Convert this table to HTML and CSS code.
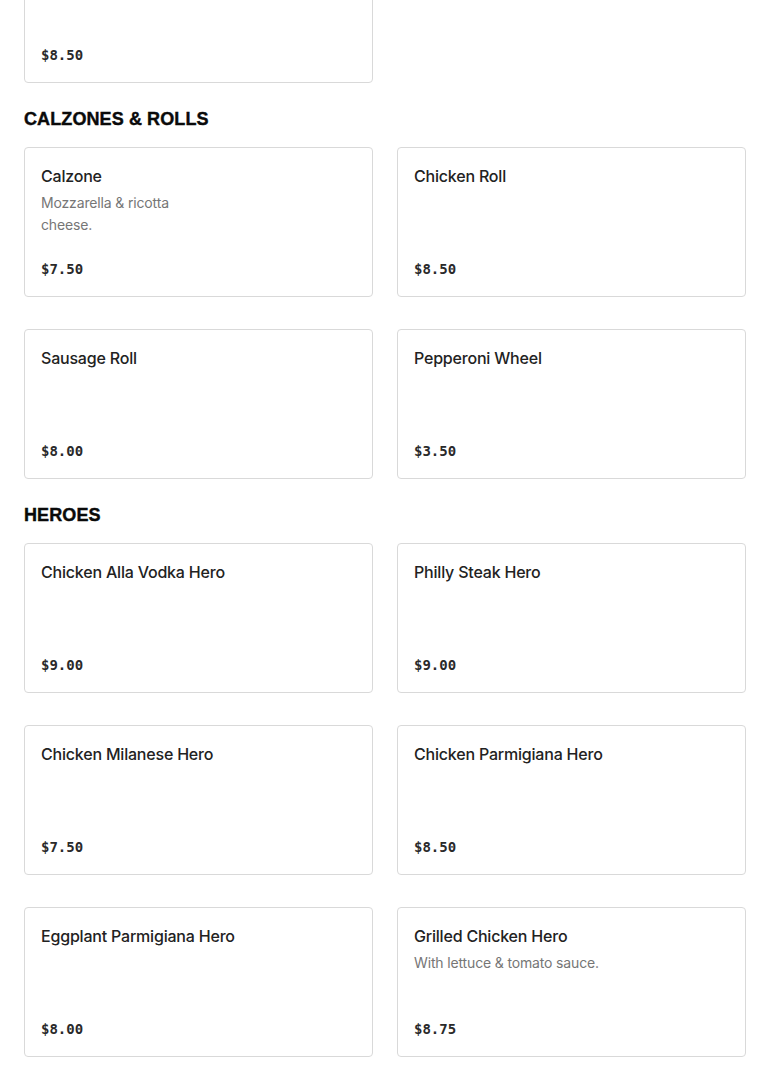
FILE: index.html
```html
<!DOCTYPE html>
<html lang="en">
<head>
<meta charset="utf-8">
<title>Menu</title>
<link rel="stylesheet" href="styles.css">
</head>
<body>
<main class="menu">
  <section class="section section-first">
    <div class="grid">
      <div class="card">
        <div class="title">&nbsp;</div>
        <div class="price">$8.50</div>
      </div>
    </div>
  </section>

  <section class="section">
    <h2 class="heading">CALZONES &amp; ROLLS</h2>
    <div class="grid">
      <div class="card">
        <div class="title">Calzone</div>
        <div class="desc">Mozzarella &amp; ricotta<br>cheese.</div>
        <div class="price">$7.50</div>
      </div>
      <div class="card">
        <div class="title">Chicken Roll</div>
        <div class="price">$8.50</div>
      </div>
      <div class="card">
        <div class="title">Sausage Roll</div>
        <div class="price">$8.00</div>
      </div>
      <div class="card">
        <div class="title">Pepperoni Wheel</div>
        <div class="price">$3.50</div>
      </div>
    </div>
  </section>

  <section class="section">
    <h2 class="heading">HEROES</h2>
    <div class="grid">
      <div class="card">
        <div class="title">Chicken Alla Vodka Hero</div>
        <div class="price">$9.00</div>
      </div>
      <div class="card">
        <div class="title">Philly Steak Hero</div>
        <div class="price">$9.00</div>
      </div>
      <div class="card">
        <div class="title">Chicken Milanese Hero</div>
        <div class="price">$7.50</div>
      </div>
      <div class="card">
        <div class="title">Chicken Parmigiana Hero</div>
        <div class="price">$8.50</div>
      </div>
      <div class="card">
        <div class="title">Eggplant Parmigiana Hero</div>
        <div class="price">$8.00</div>
      </div>
      <div class="card">
        <div class="title">Grilled Chicken Hero</div>
        <div class="desc">With lettuce &amp; tomato sauce.</div>
        <div class="price">$8.75</div>
      </div>
    </div>
  </section>
</main>
</body>
</html>
```

FILE: styles.css
```css
html, body {
  margin: 0;
  padding: 0;
  background: #ffffff;
}

body {
  font-family: Inter, "Liberation Sans", Arial, sans-serif;
  color: #1f1f1f;
}

.menu {
  padding: 0 24px;
  margin-top: -67px;
}

.heading {
  margin: 24px 0 16px;
  font-family: "Liberation Sans", Arial, sans-serif;
  font-weight: 900;
  font-size: 18px;
  line-height: 24px;
  color: #0a0a0a;
  letter-spacing: 0.1px;
  -webkit-text-stroke: 0.4px #0a0a0a;
}

.grid {
  display: grid;
  grid-template-columns: 1fr 1fr;
  column-gap: 24px;
  row-gap: 32px;
}

.card {
  box-sizing: border-box;
  height: 150px;
  border: 1px solid #d9d9d9;
  border-radius: 4px;
  padding: 16px 16px 17px;
  display: flex;
  flex-direction: column;
  background: #fff;
}

.title {
  font-family: Inter, "Liberation Sans", Arial, sans-serif;
  font-size: 16px;
  line-height: 24px;
  font-weight: 500;
  letter-spacing: -0.2px;
  color: #222222;
}

.desc {
  margin-top: 4px;
  font-family: Inter, "Liberation Sans", Arial, sans-serif;
  font-size: 14px;
  line-height: 22px;
  letter-spacing: -0.15px;
  color: #767676;
}

.price {
  margin-top: auto;
  font-family: "DejaVu Sans Mono", "Liberation Mono", monospace;
  font-size: 14px;
  line-height: 20px;
  font-weight: 700;
  color: #2a2a2a;
}
```
